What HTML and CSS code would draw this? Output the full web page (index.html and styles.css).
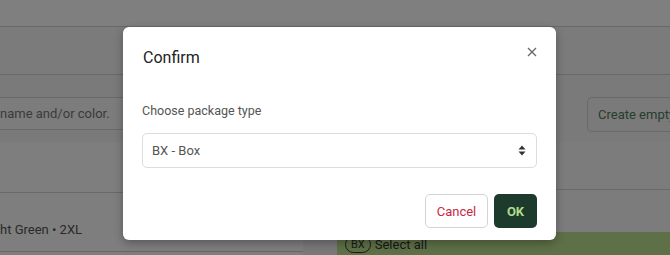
FILE: index.html
```html
<!DOCTYPE html>
<html>
<head>
<meta charset="utf-8">
<link rel="stylesheet" href="styles.css">
</head>
<body>
<div class="page">
  <div class="topbar"></div>
  <div class="toolbar"></div>
  <div class="searchrow">
    <div class="search">name and/or color.</div>
    <div class="spacer"></div>
    <div class="create-btn">Create empty</div>
  </div>
  <div class="content">
    <div class="left">
      <div class="left-head"></div>
      <div class="item">ht Green • 2XL</div>
    </div>
    <div class="right">
      <div class="right-head"></div>
      <div class="right-mid"></div>
      <div class="greenbar"><span class="pill">BX</span><span>Select all</span></div>
    </div>
  </div>
</div>
<div class="overlay"></div>
<div class="modal">
  <div class="modal-head">
    <h2 class="modal-title">Confirm</h2>
    <svg class="close" width="10" height="10" viewBox="0 0 10 10"><path d="M1 1L9 9M9 1L1 9" stroke="#6b6b6b" stroke-width="1.4" fill="none"/></svg>
  </div>
  <div class="modal-body">
    <div class="label">Choose package type</div>
    <div class="select">
      <span>BX - Box</span>
      <svg class="arrows" width="8" height="11" viewBox="0 0 8 11"><path d="M4 0.5L7.5 4.5H0.5Z M4 10.5L7.5 6.5H0.5Z" fill="#333"/></svg>
    </div>
  </div>
  <div class="modal-foot">
    <div class="btn cancel">Cancel</div>
    <div class="btn ok">OK</div>
  </div>
</div>
</body>
</html>
```

FILE: styles.css
```css
html, body {
  margin: 0;
  padding: 0;
}
body {
  width: 670px;
  height: 255px;
  overflow: hidden;
  font-family: Roboto, "Liberation Sans", sans-serif;
  position: relative;
  background: #f2f2f2;
}
.page {
  display: flex;
  flex-direction: column;
}
.topbar {
  height: 26px;
  background: #ffffff;
  border-bottom: 1px solid #d2d2d2;
}
.toolbar {
  height: 47px;
  background: #f6f6f6;
  border-bottom: 1px solid #d2d2d2;
}
.searchrow {
  height: 67px;
  background: #f4f4f4;
  display: flex;
  align-items: flex-start;
  padding-top: 22px;
  box-sizing: border-box;
}
.search {
  width: 300px;
  height: 33px;
  box-sizing: border-box;
  border-top: 1px solid #d2d2d2;
  border-bottom: 1px solid #d2d2d2;
  background: #f8f8f8;
  font-size: 13px;
  color: #777;
  line-height: 31px;
}
.spacer { flex: 1; }
.create-btn {
  height: 35px;
  box-sizing: border-box;
  border: 1px solid #d2d2d2;
  border-right: none;
  border-radius: 5px 0 0 5px;
  padding: 0 0 0 10px;
  font-size: 13px;
  line-height: 33px;
  color: #4f7a5c;
  background: #f4f4f4;
  white-space: nowrap;
  width: 83px;
}
.content {
  display: flex;
  gap: 34px;
  height: 115px;
}
.left {
  width: 303px;
  background: #fcfcfc;
}
.left-head {
  height: 50px;
  border-bottom: 1px solid #d2d2d2;
}
.item {
  height: 59px;
  border-bottom: 1px solid #cfcfcf;
  font-size: 13px;
  color: #555;
  line-height: 16px;
  padding-top: 29px;
  box-sizing: border-box;
}
.right {
  flex: 1;
  background: #f8f8f8;
}
.right-head {
  height: 47px;
  border-bottom: 1px solid #d2d2d2;
}
.right-mid {
  height: 42px;
}
.greenbar {
  height: 24px;
  background: #bde08e;
  display: flex;
  align-items: center;
  gap: 4px;
  padding-left: 8px;
  font-size: 13px;
  color: #333;
}
.pill {
  border: 1px solid #333;
  border-radius: 10px;
  padding: 1px 5px;
  font-size: 11px;
}
.overlay {
  position: absolute;
  inset: 0;
  background: rgba(0, 0, 0, 0.5);
}
.modal {
  position: absolute;
  left: 123px;
  top: 27px;
  width: 433px;
  height: 213px;
  box-sizing: border-box;
  background: #fff;
  border-radius: 6px;
  box-shadow: 0 3px 10px rgba(0, 0, 0, 0.3);
  padding: 0 19px;
  display: flex;
  flex-direction: column;
}
.modal-head {
  display: flex;
  justify-content: space-between;
  align-items: flex-start;
  height: 60px;
}
.modal-title {
  margin: 0;
  padding-top: 19px;
  padding-left: 1px;
  font-size: 16px;
  font-weight: 400;
  color: #222;
  line-height: 24px;
}
.close {
  margin-top: 20px;
}
.modal-body {
  display: flex;
  flex-direction: column;
}
.label {
  font-size: 12.5px;
  color: #555;
  line-height: 16px;
  margin-top: 16px;
  margin-bottom: 14px;
}
.select {
  height: 35px;
  box-sizing: border-box;
  border: 1px solid #dcdcdc;
  border-radius: 5px;
  display: flex;
  align-items: center;
  justify-content: space-between;
  padding: 0 10px 0 9px;
  font-size: 13px;
  color: #555;
}
.modal-foot {
  display: flex;
  justify-content: flex-end;
  gap: 6px;
  margin-top: 26px;
}
.btn {
  height: 34px;
  box-sizing: border-box;
  border-radius: 5px;
  font-size: 13px;
  display: flex;
  align-items: center;
  justify-content: center;
}
.cancel {
  width: 63px;
  border: 1px solid #d4d4d4;
  color: #c8283f;
  background: #fff;
}
.ok {
  width: 43px;
  background: #1c3b2c;
  color: #b2db8c;
  font-weight: 700;
}
```
